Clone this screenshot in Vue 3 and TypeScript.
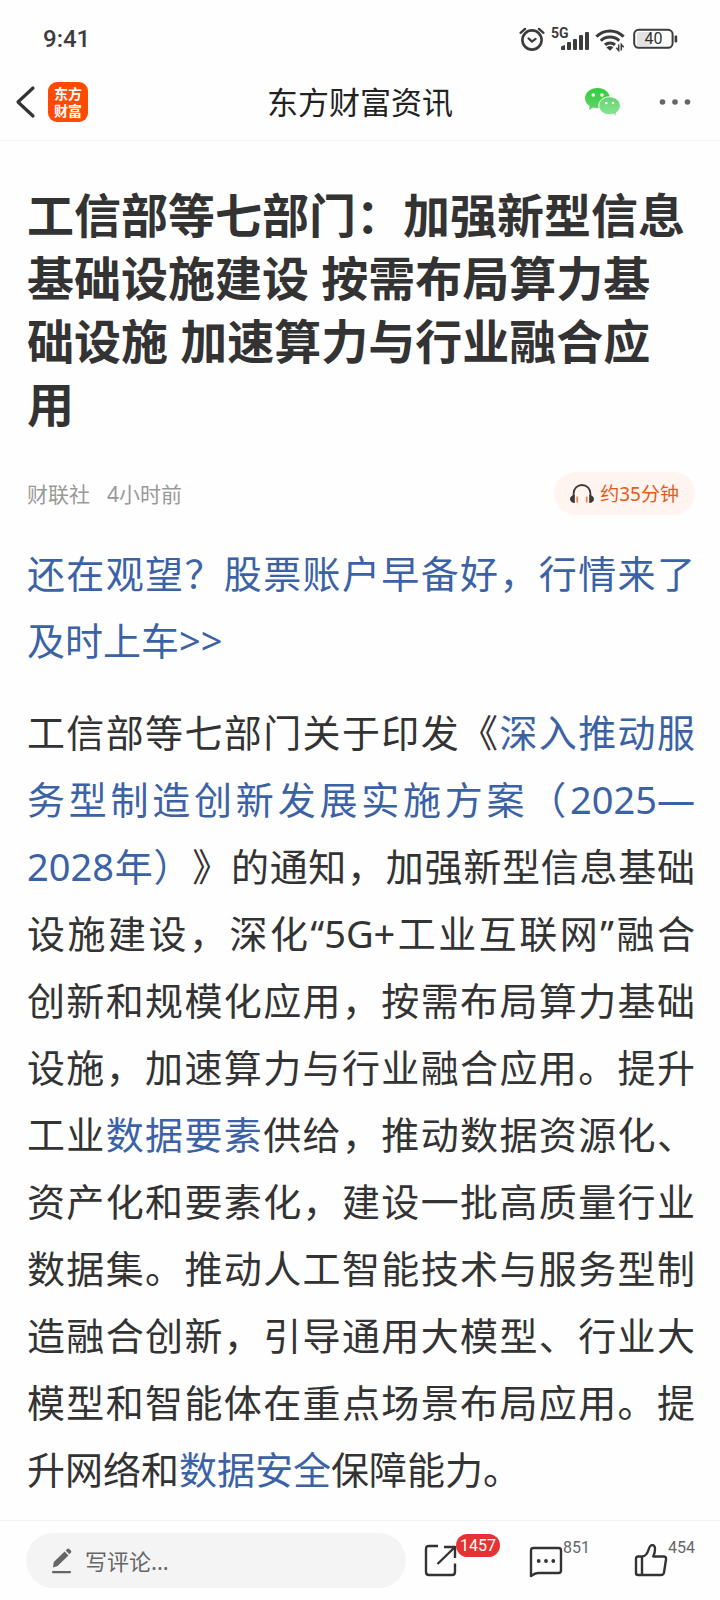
<script setup lang="ts">
import { ref } from 'vue'

interface Piece {
  text: string
  link?: boolean
}

const comment = ref('')

const headline =
  '工信部等七部门：加强新型信息基础设施建设 按需布局算力基础设施 加速算力与行业融合应用'

const body: Piece[] = [
  { text: '工信部等七部门关于印发《' },
  { text: '深入推动服务型制造创新发展实施方案（2025—2028年）', link: true },
  {
    text: '》的通知，加强新型信息基础设施建设，深化“5G+工业互联网”融合创新和规模化应用，按需布局算力基础设施，加速算力与行业融合应用。提升工业',
  },
  { text: '数据要素', link: true },
  {
    text: '供给，推动数据资源化、资产化和要素化，建设一批高质量行业数据集。推动人工智能技术与服务型制造融合创新，引导通用大模型、行业大模型和智能体在重点场景布局应用。提升网络和',
  },
  { text: '数据安全', link: true },
  { text: '保障能力。' },
]
</script>

<template>
  <div class="page" lang="zh-CN">
    <div class="status">
      <span class="clock">9:41</span>
      <div class="status-icons">
        <svg width="26" height="26" viewBox="0 0 26 26" fill="none" stroke="#3c3c3c" stroke-linecap="round">
          <circle cx="13" cy="14" r="9.6" stroke-width="2.6" />
          <path d="M9.500 12.400 13 15.600l3.600-2.700" stroke-width="2.200" stroke-linejoin="round" />
          <path d="M1.600 6.800 6 2.900M24.400 6.800 20 2.900" stroke-width="2.400" />
        </svg>
        <svg class="signal" width="38" height="26" viewBox="0 0 38 26" fill="#3c3c3c">
          <text x="0" y="12" font-size="14" font-weight="700">5G</text>
          <path d="M10 21.500q0-1 1-1.400l3-1.100v5h-3q-1 0-1-1z" />
          <rect x="16" y="16" width="4" height="8" rx="1" />
          <rect x="22" y="13" width="4" height="11" rx="1" />
          <rect x="28" y="9" width="4" height="15" rx="1" />
          <rect x="34" y="6" width="4" height="18" rx="1" />
        </svg>
        <svg class="wifi" width="30" height="26" viewBox="0 0 30 26" fill="none" stroke="#3c3c3c">
          <path d="M1.400 10.600C9 3 21 3 28.600 10.600" stroke-width="3" />
          <path d="M5.800 14.800c5-5 13.400-5 18.400 0" stroke-width="3" />
          <path d="M10 18.900c2.800-2.700 7.200-2.700 10 0" stroke-width="3" />
          <path d="M11.400 21.400q3.600-2.600 7 0l-3.400 3.400z" fill="#3c3c3c" stroke="none" />
          <path d="M23.700 18.500v6l-2.400-2.700M26.300 24.500v-6l2.400 2.700" stroke-width="1.500" />
        </svg>
        <svg class="battery" width="46" height="22" viewBox="0 0 46 22">
          <rect x="4" y="4" width="14" height="14" rx="2" fill="#e2e2e2" />
          <rect x="1.200" y="1.800" width="38.400" height="18" rx="4.500" fill="none" stroke="#3c3c3c" stroke-width="2" />
          <rect x="41.600" y="7.600" width="2.600" height="6.800" rx="1" fill="#3c3c3c" />
          <text x="20.500" y="16.400" text-anchor="middle" font-size="16" fill="#333">40</text>
        </svg>
      </div>
    </div>

    <header class="nav">
      <div class="nav-side">
        <button class="icon-button" type="button" aria-label="返回">
          <svg width="22" height="34" viewBox="0 0 22 34" fill="none" stroke="#333" stroke-width="3.200" stroke-linecap="round" stroke-linejoin="round">
            <path d="M19 3 4 17l15 14" />
          </svg>
        </button>
        <a class="logo" href="#"><span>东方</span><span>财富</span></a>
      </div>
      <h2 class="nav-title">东方财富资讯</h2>
      <div class="nav-side nav-right">
        <button class="icon-button" type="button" aria-label="微信分享">
          <svg width="36" height="30" viewBox="0 0 36 30">
            <defs>
              <linearGradient id="wx-back" x1="0" y1="0" x2="0" y2="1">
                <stop offset="0" stop-color="#2fcd3e" />
                <stop offset="1" stop-color="#62d46c" />
              </linearGradient>
              <linearGradient id="wx-front" x1="0" y1="0" x2="0" y2="1">
                <stop offset="0" stop-color="#62d36d" />
                <stop offset="1" stop-color="#8ee696" />
              </linearGradient>
            </defs>
            <path d="M12.500 1C5.600 1 0 5.500 0 11.200c0 3.200 1.800 6 4.600 7.900L4 22.800l4.200-2.200c1.400.4 2.800.6 4.300.6 6.900 0 12.500-4.400 12.500-10S19.400 1 12.500 1z" fill="url(#wx-back)" />
            <path d="M24.600 9.800c-6 0-10.800 4-10.800 9s4.800 9 10.800 9c1.200 0 2.400-.2 3.500-.5l3.600 1.900-.7-3.200c2.600-1.600 4.400-4.200 4.400-7.200 0-5-4.800-9-10.800-9z" fill="url(#wx-front)" stroke="#fff" stroke-width="1" />
            <g fill="#fff">
              <circle cx="8.300" cy="8" r="1.800" />
              <circle cx="17" cy="8" r="1.800" />
              <circle cx="21.300" cy="16" r="1.300" />
              <circle cx="28" cy="16" r="1.300" />
            </g>
          </svg>
        </button>
        <button class="icon-button" type="button" aria-label="更多">
          <svg width="32" height="8" viewBox="0 0 32 8" fill="#666">
            <circle cx="3.500" cy="4" r="2.800" />
            <circle cx="16" cy="4" r="2.800" />
            <circle cx="28.500" cy="4" r="2.800" />
          </svg>
        </button>
      </div>
    </header>

    <main class="article">
      <h1 class="headline">{{ headline }}</h1>

      <div class="meta">
        <span>财联社</span>
        <span>4小时前</span>
        <button class="listen" type="button">
          <svg width="24" height="20" viewBox="0 0 24 20" fill="none">
            <path d="M3.600 12V9.400a8.400 8.400 0 0 1 16.800 0V12" stroke="#3a3a3a" stroke-width="1.800" />
            <path d="M4.800 11v8C2 19 0 17.300 0 15s2-4 4.800-4zM19.200 11v8c2.800 0 4.800-1.700 4.800-4s-2-4-4.800-4z" fill="#3a3a3a" />
            <path d="M7.200 12.500v6M16.800 12.500v6" stroke="#ee8a5c" stroke-width="1.800" />
          </svg>
          <span>约35分钟</span>
        </button>
      </div>

      <p class="text promo"><a href="#">还在观望？股票账户早备好，行情来了及时上车&gt;&gt;</a></p>
      <p class="text"><template v-for="(piece, i) in body" :key="i"><a v-if="piece.link" href="#">{{ piece.text }}</a><template v-else>{{ piece.text }}</template></template></p>
    </main>

    <footer class="toolbar">
      <label class="comment">
        <svg width="20" height="28" viewBox="0 0 20 28" fill="#666">
          <path d="M1 20.500 1.800 15 12.600 4.600l3.800 3.800L5.600 18.900z" />
          <path d="M13.700 3.500 15.400 1.800q.8-.7 1.600 0l2 2q.8.800 0 1.600l-1.600 1.800z" />
          <rect x="0" y="24" width="19" height="2.200" rx="1" />
        </svg>
        <input v-model="comment" type="text" placeholder="写评论..." aria-label="写评论" />
      </label>
      <div class="actions">
        <button class="action" type="button" aria-label="分享">
          <svg width="34" height="34" viewBox="0 0 34 34" fill="none" stroke="#333" stroke-width="2.400" stroke-linejoin="round">
            <path d="M14 2H5Q2 2 2 5v23q0 3 3 3h23q3 0 3-3V19.500M20 3h11v11M31 3 13.500 20" />
          </svg>
          <span class="badge">1457</span>
        </button>
        <button class="action" type="button" aria-label="评论">
          <svg width="34" height="34" viewBox="0 0 34 34" fill="none" stroke="#333" stroke-width="2.400" stroke-linejoin="round">
            <path d="M2 32V6.500Q2 4 4.500 4h25Q32 4 32 6.500v20q0 2.500-2.500 2.500H9q-3 0-7 3z" />
            <g fill="#333" stroke="none">
              <circle cx="9.700" cy="17" r="1.900" />
              <circle cx="17" cy="17" r="1.900" />
              <circle cx="24.300" cy="17" r="1.900" />
            </g>
          </svg>
          <span class="count">851</span>
        </button>
        <button class="action" type="button" aria-label="点赞">
          <svg width="34" height="34" viewBox="0 0 34 34" fill="none" stroke="#333" stroke-width="2.400" stroke-linejoin="round">
            <path d="M8 12.500H4q-2 0-2 2V29q0 2 2 2h4zM8 12.500c4 0 6-4.500 7-8 .9-3.200 3-4 4.700-2.900 2.300 1.600 1.200 6.600-.4 10.900h10.200q3 0 2.500 3L30 28.500q-.5 2.500-3 2.500H8" />
          </svg>
          <span class="count">454</span>
        </button>
      </div>
    </footer>
  </div>
</template>

<style>
body {
  margin: 0;
  background: #fefefe;
}
</style>

<style scoped>
.page {
  display: flex;
  flex-direction: column;
  min-height: 100vh;
  background: #fefefe;
  color: #333;
  font-family: 'Noto Sans', 'Noto Sans CJK SC', sans-serif;
  text-spacing-trim: space-all;
}

button,
input {
  margin: 0;
  padding: 0;
  border: 0;
  background: none;
  color: inherit;
  font: inherit;
}

svg {
  display: block;
  flex: none;
}

a {
  color: #3c62a6;
  text-decoration: none;
}

.status {
  display: flex;
  align-items: center;
  justify-content: space-between;
  height: 64px;
  padding: 14px 41px 0 43px;
  box-sizing: border-box;
}

.clock {
  color: #3c3c3c;
  font-family: Roboto, sans-serif;
  font-size: 24px;
  font-weight: 500;
}

.status-icons {
  display: flex;
  align-items: center;
  gap: 6px;
  font-family: Roboto, sans-serif;
}

.signal {
  overflow: visible;
}

.wifi {
  margin-right: 2px;
}

.nav {
  display: grid;
  grid-template-columns: 1fr auto 1fr;
  align-items: center;
  height: 77px;
  padding: 0 14px;
  border-bottom: 1px solid #f2f2f2;
  box-sizing: border-box;
}

.nav-side {
  display: flex;
  align-items: center;
  gap: 12px;
}

.nav-right {
  justify-content: flex-end;
  gap: 38px;
  padding-right: 15px;
}

.nav-title {
  margin: 0;
  color: #222;
  font-size: 31px;
  font-weight: 400;
  line-height: 40px;
}

.icon-button {
  display: flex;
}

.logo {
  display: flex;
  flex-direction: column;
  align-items: center;
  justify-content: center;
  width: 40px;
  height: 40px;
  border-radius: 9px;
  background: #ff4a03;
  color: #fff;
  font-size: 14px;
  font-weight: 700;
  line-height: 17px;
}

.article {
  flex: 1;
  padding: 43px 25px 8px 27px;
}

.headline {
  margin: 0;
  font-size: 47px;
  font-weight: 700;
  line-height: 63px;
}

.meta {
  display: flex;
  align-items: center;
  gap: 17px;
  margin-top: 36px;
  color: #999;
  font-size: 21px;
  line-height: 28px;
}

.listen {
  display: flex;
  align-items: center;
  gap: 6px;
  height: 43px;
  margin-left: auto;
  padding: 0 16px;
  border-radius: 22px;
  background: #fff4f0;
  color: #e65a17;
  font-size: 19px;
}

.text {
  margin: 0;
  font-size: 38px;
  line-height: 67px;
  text-align: justify;
}

.promo {
  margin: 25px 0;
}

.toolbar {
  position: sticky;
  bottom: 0;
  display: flex;
  align-items: center;
  gap: 18px;
  height: 80px;
  padding: 0 25px 0 26px;
  border-top: 1px solid #f2f2f2;
  background: #fefefe;
  box-sizing: border-box;
}

.comment {
  display: flex;
  flex: 1;
  align-items: center;
  gap: 13px;
  min-width: 0;
  height: 55px;
  padding: 0 26px;
  border-radius: 28px;
  background: #f4f4f4;
  box-sizing: border-box;
}

.comment input {
  flex: 1;
  min-width: 0;
  outline: none;
  font-size: 22px;
}

.comment input::placeholder {
  color: #666;
  opacity: 1;
}

.actions {
  display: flex;
  gap: 71px;
  padding-right: 27px;
}

.action {
  position: relative;
  display: flex;
}

.badge,
.count {
  position: absolute;
  left: 100%;
  top: -10px;
  font-family: Roboto, sans-serif;
  font-size: 16px;
  line-height: 23px;
}

.badge {
  margin-left: -2px;
  padding: 0 4px;
  border-radius: 12px;
  background: #e63232;
  color: #fff;
}

.count {
  top: -8px;
  color: #666;
}
</style>
